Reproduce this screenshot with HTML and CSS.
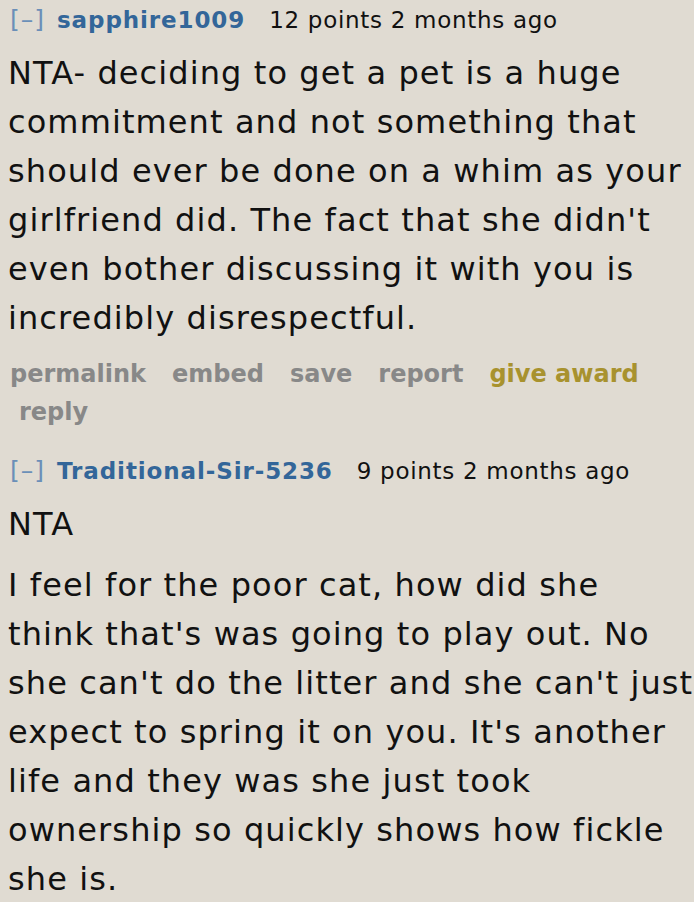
FILE: index.html
```html
<!DOCTYPE html>
<html>
<head>
<meta charset="utf-8">
<link rel="stylesheet" href="styles.css">
</head>
<body>
<div class="page">
  <div class="comment">
    <div class="tagline">
      <span class="expand">[–]</span>
      <span class="author">sapphire1009</span>
      <span class="score">12 points 2 months ago</span>
    </div>
    <div class="md">
      <p>NTA- deciding to get a pet is a huge commitment and not something that should ever be done on a whim as your girlfriend did. The fact that she didn't even bother discussing it with you is incredibly disrespectful.</p>
    </div>
    <ul class="buttons">
      <li>permalink</li>
      <li>embed</li>
      <li>save</li>
      <li>report</li>
      <li class="award">give award</li>
      <li class="reply">reply</li>
    </ul>
  </div>
  <div class="comment second">
    <div class="tagline">
      <span class="expand">[–]</span>
      <span class="author">Traditional-Sir-5236</span>
      <span class="score">9 points 2 months ago</span>
    </div>
    <div class="md">
      <p>NTA</p>
      <p>I feel for the poor cat, how did she think&nbsp;that's was going to play out. No she can't do the litter and she can't just expect to spring it on you. It's another life and they was she just took ownership so quickly shows how fickle she is.</p>
    </div>
  </div>
</div>
</body>
</html>
```
FILE: styles.css
```css
html, body {
  margin: 0;
  padding: 0;
  background: #ffffff;
}
.page {
  width: 694px;
  height: 902px;
  background: #e0dbd2;
  padding: 0 0 0 8px;
  box-sizing: border-box;
  overflow: hidden;
  font-family: "DejaVu Sans", Verdana, sans-serif;
  color: #111111;
}
.comment {
  margin: 0;
}
.comment.second {
  margin-top: 20px;
}
.tagline {
  display: flex;
  align-items: baseline;
  font-size: 23px;
  line-height: 40px;
  letter-spacing: 0.7px;
  padding-left: 2px;
  white-space: nowrap;
}
.expand {
  color: #6b8fb8;
  font-size: 25px;
  letter-spacing: 1px;
  margin-right: 12px;
}
.author {
  color: #336699;
  font-weight: bold;
  letter-spacing: 0.9px;
  margin-right: 24px;
}
.score {
  color: #111111;
}
.md {
  font-size: 32px;
  line-height: 49px;
  letter-spacing: 1.1px;
  padding-top: 9px;
  margin-right: -4px;
}
.md p {
  margin: 0 0 12px 0;
}
.buttons {
  list-style: none;
  margin: 0;
  padding: 0 0 0 2px;
  display: flex;
  flex-wrap: wrap;
  width: 660px;
  font-size: 24px;
  line-height: 38px;
  font-weight: bold;
  color: #888888;
  column-gap: 26px;
}
.buttons .award {
  color: #a8922e;
}
.buttons .reply {
  padding-left: 9px;
}
```
